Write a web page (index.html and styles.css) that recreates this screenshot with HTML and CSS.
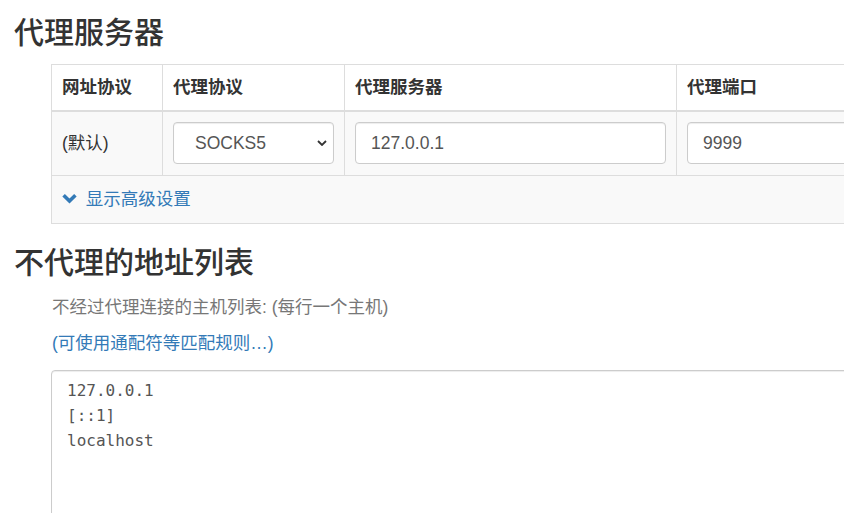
FILE: index.html
```html
<!DOCTYPE html>
<html lang="zh-CN">
<head>
    <meta charset="UTF-8">
    <meta name="viewport" content="width=device-width, initial-scale=1.0">
    <title>代理服务器</title>
    <link rel="stylesheet" href="styles.css">
</head>
<body>
    <section class="section">
        <h2 class="section-title">代理服务器</h2>
        <div class="section-body">
            <table class="proxy-table">
                <colgroup>
                    <col class="col-scheme">
                    <col class="col-protocol">
                    <col class="col-server">
                    <col class="col-port">
                </colgroup>
                <thead>
                    <tr>
                        <th>网址协议</th>
                        <th>代理协议</th>
                        <th>代理服务器</th>
                        <th>代理端口</th>
                    </tr>
                </thead>
                <tbody>
                    <tr>
                        <td>(默认)</td>
                        <td>
                            <div class="select-wrap">
                                <select class="form-control">
                                    <option>SOCKS5</option>
                                </select>
                                <svg class="select-arrow" width="10" height="6" viewBox="0 0 10 6">
                                    <path d="M1 1 L5 5 L9 1" fill="none" stroke="#333" stroke-width="1.8"/>
                                </svg>
                            </div>
                        </td>
                        <td><input class="form-control" type="text" value="127.0.0.1"></td>
                        <td><input class="form-control" type="text" value="9999"></td>
                    </tr>
                    <tr>
                        <td colspan="4" class="advanced-cell">
                            <a class="advanced-link" href="#">
                                <svg class="chevron" width="15" height="11" viewBox="0 0 15 11">
                                    <path d="M1.6 2.2 L7.5 8 L13.4 2.2" fill="none" stroke="#337ab7" stroke-width="3.6"/>
                                </svg>
                                显示高级设置
                            </a>
                        </td>
                    </tr>
                </tbody>
            </table>
        </div>
    </section>

    <section class="section">
        <h2 class="section-title bypass-title">不代理的地址列表</h2>
        <div class="section-body">
            <p class="help-text">不经过代理连接的主机列表: (每行一个主机)</p>
            <p class="help-link"><a href="#">(可使用通配符等匹配规则…)</a></p>
            <textarea class="bypass-list" spellcheck="false">127.0.0.1
[::1]
localhost</textarea>
        </div>
    </section>
</body>
</html>
```

FILE: styles.css
```css
html, body {
    overflow: hidden;
}
body {
    margin: 0;
    width: 1100px;
    font-family: "Liberation Sans", "Noto Sans CJK SC", sans-serif;
    font-size: 17.5px;
    color: #333;
    background-color: #fff;
}
.section-title {
    margin: 16px 0 15px 14px;
    font-size: 30px;
    font-weight: 500;
    line-height: 33px;
    color: #333;
}
.bypass-title {
    margin-top: 22px;
    margin-bottom: 16px;
}
.section-body {
    padding-left: 51px;
}

/* table */
.proxy-table {
    width: 1000px;
    table-layout: fixed;
    border-collapse: collapse;
    border: 1px solid #ddd;
}
.col-scheme { width: 111px; }
.col-protocol { width: 182px; }
.col-server { width: 332px; }
.col-port { width: 375px; }
.proxy-table th {
    text-align: left;
    font-weight: bold;
    padding: 10px 10px;
    line-height: 25px;
    border: 1px solid #ddd;
    border-bottom: 2px solid #ddd;
    background-color: #fff;
}
.proxy-table td {
    padding: 10px 10px 11px;
    line-height: 24px;
    border: 1px solid #ddd;
    background-color: #f9f9f9;
    vertical-align: middle;
}
.form-control {
    display: block;
    width: 100%;
    height: 42px;
    box-sizing: border-box;
    padding: 6px 15px;
    font-family: "Liberation Sans", "Noto Sans CJK SC", sans-serif;
    font-size: 17.5px;
    color: #555;
    background-color: #fff;
    border: 1px solid #ccc;
    border-radius: 4px;
    box-shadow: inset 0 1px 1px rgba(0, 0, 0, 0.075);
}
.select-wrap {
    position: relative;
}
select.form-control {
    appearance: none;
    -webkit-appearance: none;
    padding-left: 21px;
}
.select-arrow {
    position: absolute;
    right: 7px;
    top: 18px;
}
.proxy-table td.advanced-cell {
    padding: 11px 10px;
    line-height: 25px;
}
.advanced-link {
    color: #337ab7;
    text-decoration: none;
}
.chevron {
    margin-right: 4px;
    vertical-align: 1px;
}

/* bypass list */
.help-text {
    margin: 0 0 12px 1px;
    line-height: 24px;
    color: #777;
}
.help-link {
    margin: 0 0 15px 1px;
    line-height: 24px;
}
.help-link a {
    color: #337ab7;
    text-decoration: none;
}
.bypass-list {
    display: block;
    width: 1000px;
    height: 200px;
    box-sizing: border-box;
    padding: 7px 15px;
    font-family: "DejaVu Sans Mono", "Liberation Mono", monospace;
    font-size: 16px;
    line-height: 25px;
    color: #555;
    border: 1px solid #ccc;
    border-radius: 4px;
    box-shadow: inset 0 1px 1px rgba(0, 0, 0, 0.075);
    resize: none;
}
```
